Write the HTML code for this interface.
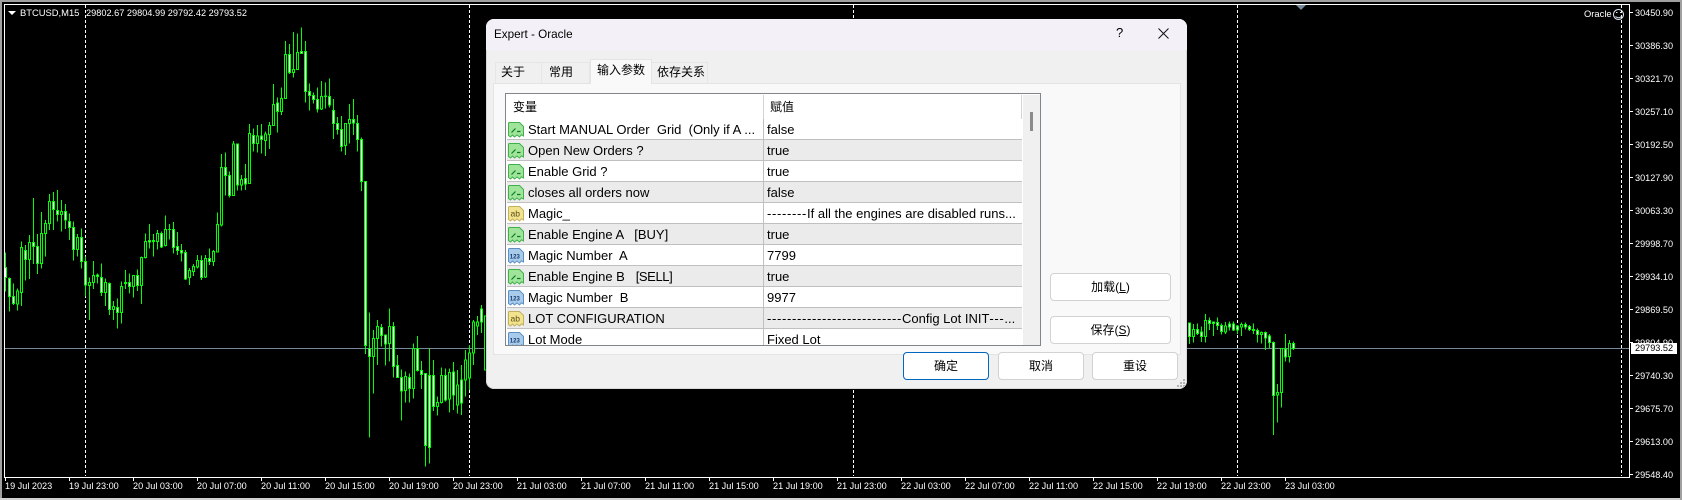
<!DOCTYPE html>
<html><head><meta charset="utf-8"><title>Expert - Oracle</title>
<style>
html,body{margin:0;padding:0;background:#000}
body{position:relative;width:1682px;height:500px;overflow:hidden;font-family:"Liberation Sans","Noto Sans CJK SC",sans-serif}
.a{position:absolute;white-space:pre}
.p{position:absolute;left:1635px;color:#fff;font-size:9.15px;line-height:12px;height:12px;white-space:pre}
.t{position:absolute;top:480px;color:#fff;font-size:9.15px;line-height:12px;white-space:pre}
.row{position:absolute;left:507px;width:515px;height:20px;border-bottom:1px solid #c0c0c0}
.g{background:#ebebeb}.w{background:#fff}
.n{position:absolute;left:21px;top:2px;font-size:13px;line-height:17px;color:#000;white-space:pre}
.v{position:absolute;left:260px;top:2px;font-size:13px;line-height:17px;color:#000;white-space:pre}
.d{letter-spacing:.67px}
.sep{position:absolute;left:256px;top:0;width:1px;height:21px;background:#c0c0c0}
.ic{position:absolute;left:1px;top:3px;width:16px;height:16px}
.btn{position:absolute;box-sizing:border-box;background:#fff;border:1px solid #d2d2d2;border-radius:4px;font-size:12px;color:#000;text-align:center}
.tab{position:absolute;box-sizing:border-box;font-size:12px;color:#000;text-align:left;white-space:pre}
</style></head><body>
<svg class="a" style="left:0;top:0" width="1682" height="500" viewBox="0 0 1682 500" shape-rendering="crispEdges">
<rect width="1682" height="500" fill="#000"/>
<rect width="1682" height="2" fill="#a0a0a0"/><rect width="2" height="500" fill="#a0a0a0"/>
<rect y="498" width="1682" height="2" fill="#d0d0d0"/><rect x="1680" width="2" height="500" fill="#a0a0a0"/>
<g stroke="#fff" stroke-width="1" stroke-dasharray="3 2" fill="none">
<path d="M85.5 5V476M469.5 5V476M853.5 5V476M1237.5 5V476M1621.5 5V476"/>
</g>
<path d="M5 348.5H1629" stroke="#778899" stroke-width="1"/>
<g stroke="#00ff00" stroke-width="3" transform="translate(0,190) scale(.33333)">
<path fill="none" d="M16.5 188V305M28.5 262V365M40.5 280V345M52.5 295V362M64.5 155V348M76.5 165V272M88.5 135V267M100.5 24V222M112.5 132V252M124.5 66V236M136.5 90V200M148.5 12V120M160.5 6V120M172.5 0V95M184.5 30V125M196.5 42V117M208.5 70V150M220.5 95V212M232.5 132V200M244.5 115V236M256.5 200V320M268.5 262V390M280.5 213V297M292.5 250V280M304.5 220V318M316.5 265V348M328.5 278V375M340.5 333V390M352.5 325V416M364.5 275V400M376.5 240V297M388.5 250V310M400.5 255V323M412.5 238V303M424.5 200V342M436.5 130V205M448.5 102V175M460.5 132V200M472.5 120V178M484.5 124V174M496.5 76V170M508.5 102V148M520.5 96V190M532.5 126V195M544.5 162V215M556.5 180V270M568.5 234V285M580.5 222V258M592.5 195V236M604.5 197V270M616.5 195V264M628.5 175V225M640.5 180V228M652.5 68V186"/>
<path fill="#fff" d="M13.5 232h6V262h-6zM25.5 265h6V320h-6zM37.5 320h6V340h-6zM73.5 181h6V209h-6zM97.5 157h6V170h-6zM109.5 170h6V221h-6zM157.5 34h6V59h-6zM169.5 61h6V74h-6zM193.5 64h6V90h-6zM205.5 94h6V113h-6zM217.5 112h6V179h-6zM241.5 142h6V214h-6zM253.5 214h6V285h-6zM289.5 255h6V260h-6zM301.5 263h6V308h-6zM325.5 280h6V359h-6zM349.5 352h6V368h-6zM373.5 277h6V281h-6zM385.5 277h6V290h-6zM409.5 256h6V287h-6zM445.5 151h6V156h-6zM457.5 151h6V155h-6zM481.5 130h6V171h-6zM505.5 118h6V119h-6zM517.5 118h6V173h-6zM529.5 169h6V181h-6zM541.5 181h6V189h-6zM553.5 187h6V267h-6zM601.5 211h6V263h-6zM625.5 205h6V215h-6z"/>
<path fill="#000" d="M49.5 303h6V342h-6zM61.5 172h6V308h-6zM85.5 157h6V209h-6zM121.5 130h6V221h-6zM133.5 100h6V130h-6zM145.5 34h6V101h-6zM181.5 64h6V74h-6zM229.5 142h6V179h-6zM265.5 277h6V287h-6zM277.5 256h6V278h-6zM313.5 277h6V308h-6zM337.5 349h6V359h-6zM361.5 289h6V368h-6zM397.5 256h6V290h-6zM421.5 202h6V287h-6zM433.5 154h6V202h-6zM469.5 130h6V155h-6zM493.5 118h6V166h-6zM565.5 241h6V263h-6zM577.5 229h6V245h-6zM589.5 211h6V231h-6zM613.5 205h6V261h-6zM637.5 184h6V215h-6zM649.5 103h6V186h-6z"/>
</g>
<g stroke="#00ff00" stroke-width="3" transform="scale(.33333)">
<path fill="none" d="M664.5 462V680M676.5 457V587M688.5 515V592M700.5 423V587M712.5 432V572M724.5 525V572M736.5 492V570M748.5 372V551M760.5 385V455M772.5 375V458M784.5 372V460M796.5 395V468M808.5 366V447M820.5 252V378M832.5 292V398M844.5 262V345M856.5 123V295M868.5 132V222M880.5 96V233M892.5 100V208M904.5 82V160M916.5 123V308M928.5 250V332M940.5 278V310M952.5 262V338M964.5 243V330M976.5 247V325M988.5 235V322M1000.5 297V417M1012.5 351V403M1024.5 348V455M1036.5 369V465M1048.5 312V430M1060.5 297V405M1072.5 345V455M1084.5 412V573M1096.5 545V1062M1360.5 1086V1230M1372.5 1110V1240M1384.5 1095V1245M1396.5 1050V1190M1408.5 1035V1170M1420.5 960V1095M1432.5 948V1005M1444.5 915V999"/>
<path fill="#fff" d="M673.5 502h6V527h-6zM685.5 527h6V587h-6zM709.5 432h6V555h-6zM733.5 535h6V552h-6zM757.5 406h6V431h-6zM781.5 408h6V418h-6zM829.5 309h6V335h-6zM865.5 163h6V218h-6zM901.5 154h6V160h-6zM913.5 155h6V275h-6zM925.5 274h6V287h-6zM937.5 287h6V299h-6zM949.5 299h6V327h-6zM973.5 288h6V290h-6zM985.5 289h6V315h-6zM997.5 331h6V371h-6zM1009.5 371h6V389h-6zM1021.5 389h6V440h-6zM1057.5 358h6V369h-6zM1069.5 370h6V418h-6zM1081.5 418h6V545h-6zM1093.5 545h6V1037h-6zM1357.5 1116h6V1185h-6zM1381.5 1140h6V1209h-6zM1441.5 927h6V966h-6z"/>
<path fill="#000" d="M661.5 502h6V675h-6zM697.5 432h6V587h-6zM721.5 538h6V555h-6zM745.5 400h6V551h-6zM769.5 408h6V431h-6zM793.5 402h6V422h-6zM805.5 376h6V404h-6zM817.5 313h6V377h-6zM841.5 295h6V335h-6zM853.5 163h6V295h-6zM877.5 208h6V218h-6zM889.5 157h6V208h-6zM961.5 290h6V327h-6zM1033.5 371h6V437h-6zM1045.5 358h6V371h-6zM1369.5 1155h6V1215h-6zM1393.5 1080h6V1140h-6zM1405.5 1059h6V1134h-6zM1417.5 966h6V1059h-6zM1429.5 966h6V978h-6zM1453.5 948h6V1110h-6z"/>
</g>
<g stroke="#00ff00" stroke-width="3" transform="translate(0,250) scale(.33333)">
<path fill="none" d="M1108.5 188V563M1120.5 240V430M1132.5 210V345M1144.5 222V290M1156.5 255V347M1168.5 175V335M1180.5 216V383M1192.5 315V383M1204.5 358V512M1216.5 365V457M1228.5 370V458M1240.5 280V446M1252.5 258V365M1264.5 333V417M1276.5 370V650M1288.5 296V640M1300.5 330V483M1312.5 440V497M1324.5 352V460M1336.5 355V455M1348.5 355V487"/>
<path fill="#fff" d="M1105.5 296h6V320h-6zM1141.5 232h6V257h-6zM1153.5 255h6V282h-6zM1177.5 229h6V349h-6zM1189.5 347h6V383h-6zM1201.5 382h6V423h-6zM1225.5 382h6V416h-6zM1249.5 296h6V362h-6zM1261.5 362h6V374h-6zM1273.5 371h6V586h-6zM1285.5 376h6V593h-6zM1297.5 376h6V470h-6zM1333.5 376h6V450h-6z"/>
<path fill="#000" d="M1117.5 265h6V320h-6zM1129.5 229h6V265h-6zM1165.5 229h6V281h-6zM1213.5 380h6V422h-6zM1237.5 296h6V416h-6zM1309.5 457h6V470h-6zM1321.5 376h6V458h-6zM1345.5 367h6V447h-6z"/>
</g>
<g stroke="#00ff00" stroke-width="3" transform="translate(1100,270) scale(.33333)">
<path fill="none" d="M268.5 157V222M280.5 162V218M292.5 160V195M304.5 170V216M316.5 132V218M328.5 142V180M340.5 155V198M352.5 142V180M364.5 160V194M376.5 156V192M388.5 155V182M400.5 155V183M412.5 165V192M424.5 158V198M436.5 158V178M448.5 165V183M460.5 160V192M472.5 175V218M484.5 185V220M496.5 185V240M508.5 192V235M520.5 215V495M532.5 342V458M544.5 235V413M556.5 192V275M568.5 210V278M580.5 215V240"/>
<path fill="#fff" d="M265.5 159h6V200h-6zM289.5 178h6V190h-6zM301.5 186h6V200h-6zM325.5 151h6V161h-6zM337.5 156h6V161h-6zM349.5 157h6V167h-6zM361.5 167h6V185h-6zM385.5 162h6V171h-6zM397.5 162h6V180h-6zM409.5 168h6V180h-6zM433.5 163h6V171h-6zM445.5 169h6V179h-6zM457.5 178h6V182h-6zM469.5 181h6V194h-6zM493.5 187h6V204h-6zM505.5 198h6V218h-6zM517.5 217h6V377h-6zM553.5 237h6V261h-6zM577.5 220h6V236h-6z"/>
<path fill="#000" d="M277.5 178h6V200h-6zM313.5 151h6V200h-6zM373.5 168h6V186h-6zM421.5 163h6V171h-6zM481.5 187h6V194h-6zM529.5 367h6V375h-6zM541.5 235h6V368h-6zM565.5 220h6V260h-6z"/>
</g>
<g fill="#fff">
<rect x="4" y="4" width="1626" height="1"/><rect x="4" y="4" width="1" height="474"/>
<rect x="1629" y="4" width="1" height="474"/><rect x="4" y="477" width="1626" height="1"/>
<path d="M1630 12h3v1h-3zM1630 45h3v1h-3zM1630 78h3v1h-3zM1630 111h3v1h-3zM1630 144h3v1h-3zM1630 177h3v1h-3zM1630 210h3v1h-3zM1630 243h3v1h-3zM1630 276h3v1h-3zM1630 309h3v1h-3zM1630 342h3v1h-3zM1630 375h3v1h-3zM1630 408h3v1h-3zM1630 441h3v1h-3zM1630 474h3v1h-3z"/>
<path d="M5 478h1v3h-1zM69 478h1v3h-1zM133 478h1v3h-1zM197 478h1v3h-1zM261 478h1v3h-1zM325 478h1v3h-1zM389 478h1v3h-1zM453 478h1v3h-1zM517 478h1v3h-1zM581 478h1v3h-1zM645 478h1v3h-1zM709 478h1v3h-1zM773 478h1v3h-1zM837 478h1v3h-1zM901 478h1v3h-1zM965 478h1v3h-1zM1029 478h1v3h-1zM1093 478h1v3h-1zM1157 478h1v3h-1zM1221 478h1v3h-1zM1285 478h1v3h-1z"/>
</g>
<path d="M8 11h8l-4 4z" fill="#fff" shape-rendering="auto"/>
<path d="M1296 5h10l-5 5z" fill="#778899" shape-rendering="auto"/>
<g fill="none" stroke="#d8e4f0" stroke-width="1" shape-rendering="auto">
<circle cx="1618.5" cy="14.5" r="5"/><path d="M1615.5 16.5q3 2.5 6 0"/><path d="M1616 12.5h1.5M1620 12.5h1.5"/>
</g>
</svg>

<div class="a" style="left:20px;top:7px;color:#fff;font-size:9.4px;line-height:12px">BTCUSD,M15</div>
<div class="a" style="left:86px;top:7px;color:#fff;font-size:9.2px;line-height:12px">29802.67 29804.99 29792.42 29793.52</div>
<div class="a" style="left:1584px;top:8px;color:#fff;font-size:9.4px;line-height:12px">Oracle</div>

<div class="p" style="top:7px">30450.90</div><div class="p" style="top:40px">30386.30</div><div class="p" style="top:73px">30321.70</div><div class="p" style="top:106px">30257.10</div><div class="p" style="top:139px">30192.50</div><div class="p" style="top:172px">30127.90</div><div class="p" style="top:205px">30063.30</div><div class="p" style="top:238px">29998.70</div><div class="p" style="top:271px">29934.10</div><div class="p" style="top:304px">29869.50</div><div class="p" style="top:337px">29804.90</div><div class="p" style="top:370px">29740.30</div><div class="p" style="top:403px">29675.70</div><div class="p" style="top:436px">29613.00</div><div class="p" style="top:469px">29548.40</div>
<div class="a" style="left:1631px;top:343px;width:46px;height:11px;background:#fff"></div>
<div class="a" style="left:1635px;top:342px;color:#000;font-size:9.15px;line-height:12px">29793.52</div>

<div class="t" style="left:5px">19 Jul 2023</div><div class="t" style="left:69px">19 Jul 23:00</div><div class="t" style="left:133px">20 Jul 03:00</div><div class="t" style="left:197px">20 Jul 07:00</div><div class="t" style="left:261px">20 Jul 11:00</div><div class="t" style="left:325px">20 Jul 15:00</div><div class="t" style="left:389px">20 Jul 19:00</div><div class="t" style="left:453px">20 Jul 23:00</div><div class="t" style="left:517px">21 Jul 03:00</div><div class="t" style="left:581px">21 Jul 07:00</div><div class="t" style="left:645px">21 Jul 11:00</div><div class="t" style="left:709px">21 Jul 15:00</div><div class="t" style="left:773px">21 Jul 19:00</div><div class="t" style="left:837px">21 Jul 23:00</div><div class="t" style="left:901px">22 Jul 03:00</div><div class="t" style="left:965px">22 Jul 07:00</div><div class="t" style="left:1029px">22 Jul 11:00</div><div class="t" style="left:1093px">22 Jul 15:00</div><div class="t" style="left:1157px">22 Jul 19:00</div><div class="t" style="left:1221px">22 Jul 23:00</div><div class="t" style="left:1285px">23 Jul 03:00</div>

<!-- dialog -->
<div class="a" style="left:486px;top:19px;width:701px;height:370px;background:#f0f0f0;border-radius:8px;overflow:hidden;box-shadow:inset 0 0 0 1px #d8d8d8">
<div style="position:absolute;left:0;top:0;width:701px;height:31px;background:#f3f1f7"></div>
</div>
<div class="a" style="left:494px;top:27px;font-size:11.7px;line-height:16px;color:#000">Expert - Oracle</div>
<div class="a" style="left:1116px;top:25px;font-size:13px;line-height:16px;color:#000">?</div>
<svg class="a" style="left:1158px;top:28px" width="11" height="11"><path d="M.5.5l10 10M10.5.5l-10 10" stroke="#111" stroke-width="1" fill="none"/></svg>

<!-- tabs -->
<div class="tab" style="left:495px;top:62px;width:47px;height:21px;border:1px solid #e6e6e6;border-bottom:0;line-height:19px;padding-left:5px">关于</div>
<div class="tab" style="left:542px;top:62px;width:48px;height:21px;border:1px solid #e6e6e6;border-bottom:0;border-left:0;line-height:19px;padding-left:7px">常用</div>
<div class="a" style="left:493px;top:83px;width:688px;height:272px;background:#f9f9f9;border:1px solid #e4e4e4;box-sizing:border-box"></div>
<div class="tab" style="left:590px;top:59px;width:62px;height:25px;background:#f9f9f9;border:1px solid #e4e4e4;border-bottom:0;line-height:21px;padding-left:6px">输入参数</div>
<div class="tab" style="left:652px;top:62px;width:56px;height:21px;border:1px solid #e6e6e6;border-bottom:0;border-left:0;line-height:19px;padding-left:5px">依存关系</div>

<!-- table -->
<div class="a" style="left:505px;top:93px;width:536px;height:253px;box-sizing:border-box;border:1px solid #80868c;background:#fff;overflow:hidden">
<div style="position:absolute;left:517px;top:1px;width:17px;height:252px;background:#f0f0f0"></div>
<div style="position:absolute;left:524px;top:18px;width:3px;height:19px;background:#8a8a8a"></div>
</div>
<div class="a" style="left:513px;top:99px;font-size:12px;line-height:17px;color:#000">变量</div>
<div class="a" style="left:770px;top:99px;font-size:12px;line-height:17px;color:#000">赋值</div>
<div class="a" style="left:763px;top:95px;width:1px;height:24px;background:#d4d4d4"></div>
<div class="a" style="left:1021px;top:95px;width:1px;height:24px;background:#d4d4d4"></div>

<div class="row w" style="top:119px"><div class="sep"></div><svg class="ic" viewBox="0 0 16 16"><path d="M1.5.5H11.5L15.5 4.5V14L13.5 12.8 11.5 15 9 13 6.5 15 4.5 13 2.5 15 .5 13.5V1.5Q.5.5 1.5.5Z" fill="#9fe49a" stroke="#3fb04a"/><path d="M3.5 10.5L7.5 6.5M9 9.5H12.5" fill="none" stroke="#0a7a22" stroke-width="1.2"/></svg><div class="n">Start MANUAL Order  Grid  (Only if A ...</div><div class="v">false</div></div>
<div class="row g" style="top:140px"><div class="sep"></div><svg class="ic" viewBox="0 0 16 16"><path d="M1.5.5H11.5L15.5 4.5V14L13.5 12.8 11.5 15 9 13 6.5 15 4.5 13 2.5 15 .5 13.5V1.5Q.5.5 1.5.5Z" fill="#9fe49a" stroke="#3fb04a"/><path d="M3.5 10.5L7.5 6.5M9 9.5H12.5" fill="none" stroke="#0a7a22" stroke-width="1.2"/></svg><div class="n">Open New Orders ?</div><div class="v">true</div></div>
<div class="row w" style="top:161px"><div class="sep"></div><svg class="ic" viewBox="0 0 16 16"><path d="M1.5.5H11.5L15.5 4.5V14L13.5 12.8 11.5 15 9 13 6.5 15 4.5 13 2.5 15 .5 13.5V1.5Q.5.5 1.5.5Z" fill="#9fe49a" stroke="#3fb04a"/><path d="M3.5 10.5L7.5 6.5M9 9.5H12.5" fill="none" stroke="#0a7a22" stroke-width="1.2"/></svg><div class="n">Enable Grid ?</div><div class="v">true</div></div>
<div class="row g" style="top:182px"><div class="sep"></div><svg class="ic" viewBox="0 0 16 16"><path d="M1.5.5H11.5L15.5 4.5V14L13.5 12.8 11.5 15 9 13 6.5 15 4.5 13 2.5 15 .5 13.5V1.5Q.5.5 1.5.5Z" fill="#9fe49a" stroke="#3fb04a"/><path d="M3.5 10.5L7.5 6.5M9 9.5H12.5" fill="none" stroke="#0a7a22" stroke-width="1.2"/></svg><div class="n">closes all orders now</div><div class="v">false</div></div>
<div class="row w" style="top:203px"><div class="sep"></div><svg class="ic" viewBox="0 0 16 16"><path d="M1.5.5H11.5L15.5 4.5V14L13.5 12.8 11.5 15 9 13 6.5 15 4.5 13 2.5 15 .5 13.5V1.5Q.5.5 1.5.5Z" fill="#f2e38f" stroke="#c4b05c"/><text x="2.5" y="10.5" font-family="Liberation Sans" font-size="8.5" fill="#5a4a10">ab</text></svg><div class="n">Magic_</div><div class="v"><span class="d">--------</span>If all the engines are disabled runs...</div></div>
<div class="row g" style="top:224px"><div class="sep"></div><svg class="ic" viewBox="0 0 16 16"><path d="M1.5.5H11.5L15.5 4.5V14L13.5 12.8 11.5 15 9 13 6.5 15 4.5 13 2.5 15 .5 13.5V1.5Q.5.5 1.5.5Z" fill="#9fe49a" stroke="#3fb04a"/><path d="M3.5 10.5L7.5 6.5M9 9.5H12.5" fill="none" stroke="#0a7a22" stroke-width="1.2"/></svg><div class="n">Enable Engine A   [BUY]</div><div class="v">true</div></div>
<div class="row w" style="top:245px"><div class="sep"></div><svg class="ic" viewBox="0 0 16 16"><path d="M1.5.5H11.5L15.5 4.5V14L13.5 12.8 11.5 15 9 13 6.5 15 4.5 13 2.5 15 .5 13.5V1.5Q.5.5 1.5.5Z" fill="#a9cbea" stroke="#5c90c4"/><text x="1.8" y="10.5" font-family="Liberation Sans" font-size="6" font-weight="bold" fill="#123c70">123</text></svg><div class="n">Magic Number  A</div><div class="v">7799</div></div>
<div class="row g" style="top:266px"><div class="sep"></div><svg class="ic" viewBox="0 0 16 16"><path d="M1.5.5H11.5L15.5 4.5V14L13.5 12.8 11.5 15 9 13 6.5 15 4.5 13 2.5 15 .5 13.5V1.5Q.5.5 1.5.5Z" fill="#9fe49a" stroke="#3fb04a"/><path d="M3.5 10.5L7.5 6.5M9 9.5H12.5" fill="none" stroke="#0a7a22" stroke-width="1.2"/></svg><div class="n">Enable Engine B   <span style="letter-spacing:-.4px">[SELL]</span></div><div class="v">true</div></div>
<div class="row w" style="top:287px"><div class="sep"></div><svg class="ic" viewBox="0 0 16 16"><path d="M1.5.5H11.5L15.5 4.5V14L13.5 12.8 11.5 15 9 13 6.5 15 4.5 13 2.5 15 .5 13.5V1.5Q.5.5 1.5.5Z" fill="#a9cbea" stroke="#5c90c4"/><text x="1.8" y="10.5" font-family="Liberation Sans" font-size="6" font-weight="bold" fill="#123c70">123</text></svg><div class="n">Magic Number  B</div><div class="v">9977</div></div>
<div class="row g" style="top:308px"><div class="sep"></div><svg class="ic" viewBox="0 0 16 16"><path d="M1.5.5H11.5L15.5 4.5V14L13.5 12.8 11.5 15 9 13 6.5 15 4.5 13 2.5 15 .5 13.5V1.5Q.5.5 1.5.5Z" fill="#f2e38f" stroke="#c4b05c"/><text x="2.5" y="10.5" font-family="Liberation Sans" font-size="8.5" fill="#5a4a10">ab</text></svg><div class="n">LOT CONFIGURATION</div><div class="v"><span class="d">---------------------------</span>Config Lot INIT<span class="d">---</span>...</div></div>
<div class="row w" style="top:329px;height:16px;border:0;overflow:hidden"><div class="sep"></div><svg class="ic" viewBox="0 0 16 16"><path d="M1.5.5H11.5L15.5 4.5V14L13.5 12.8 11.5 15 9 13 6.5 15 4.5 13 2.5 15 .5 13.5V1.5Q.5.5 1.5.5Z" fill="#a9cbea" stroke="#5c90c4"/><text x="1.8" y="10.5" font-family="Liberation Sans" font-size="6" font-weight="bold" fill="#123c70">123</text></svg><div class="n">Lot Mode</div><div class="v">Fixed Lot</div></div>

<!-- buttons -->
<div class="btn" style="left:1050px;top:273px;width:121px;height:28px;line-height:26px">加载(<u>L</u>)</div>
<div class="btn" style="left:1050px;top:316px;width:121px;height:28px;line-height:26px">保存(<u>S</u>)</div>
<div class="btn" style="left:903px;top:352px;width:86px;height:28px;line-height:26px;border:1.5px solid #0067c0">确定</div>
<div class="btn" style="left:998px;top:352px;width:86px;height:28px;line-height:26px">取消</div>
<div class="btn" style="left:1092px;top:352px;width:86px;height:28px;line-height:26px">重设</div>
<svg class="a" style="left:1177px;top:378px" width="9" height="9"><path d="M6 1h2v2H6zM3 4h2v2H3zM6 4h2v2H6zM0 7h2v2H0zM3 7h2v2H3zM6 7h2v2H6z" fill="#b4b4b4"/></svg>
</body></html>
